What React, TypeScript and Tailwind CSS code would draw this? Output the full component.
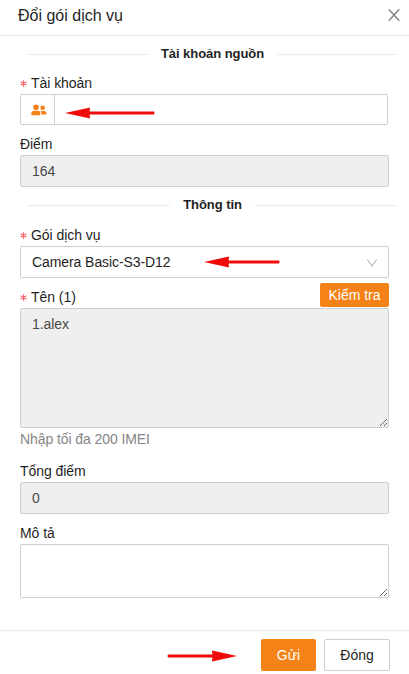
import React from "react";

function Arrow({ className, length, flip = false }: { className: string; length: number; flip?: boolean }) {
  return (
    <svg width={length} height={12} viewBox={`0 0 ${length} 12`} className={className} aria-hidden="true">
      <g fill="#f00a0a" transform={flip ? `translate(${length} 0) scale(-1 1)` : undefined}>
        <path d={`M0 6 L25 0.6 L24.6 4.6 H${length - 1} Q${length} 6 ${length - 1} 7.4 H24.6 L25 11.4 Z`} />
      </g>
    </svg>
  );
}

function Divider({ children }: { children: React.ReactNode }) {
  return (
    <div className="ml-2 -mr-2 flex h-[22px] items-center gap-[13px]">
      <span className="h-px flex-1 bg-[#ebebeb]" />
      <span className="text-[13px] font-bold leading-[22px] tracking-[-0.05px]">{children}</span>
      <span className="h-px flex-1 bg-[#ebebeb]" />
    </div>
  );
}

function Label({ children, required = false }: { children: React.ReactNode; required?: boolean }) {
  return (
    <label className="flex h-[22px] items-center whitespace-nowrap text-[14px] leading-[22px] tracking-[-0.05px]">
      {required && (
        <svg viewBox="0 0 7 7" className="mr-1 h-[7px] w-[7px]" fill="none" stroke="#f5606a" strokeWidth="1.1">
          <path d="M3.5 0.3V6.7M0.6 1.8L6.4 5.2M6.4 1.8L0.6 5.2" />
        </svg>
      )}
      {children}
    </label>
  );
}

const field = "block w-full rounded-[2px] border border-[#cfcfcf] px-[11px] text-[14px] tracking-[-0.08px] outline-none";

export default function App() {
  return (
    <div className="h-[674px] w-[409px] overflow-hidden bg-white font-['Liberation_Sans',Arial,sans-serif] text-[14px] text-[#1f1f1f]">
      <header className="flex h-[36px] items-center justify-between border-b border-[#ebebeb] pl-[18px] pr-[9px]">
        <h1 className="-mt-1 text-[16px] leading-[22px]">Đổi gói dịch vụ</h1>
        <button aria-label="Close" className="-mt-[5px]">
          <svg viewBox="0 0 12 12" className="h-[12px] w-[12px]" fill="none" stroke="#7d7d7d" strokeWidth="1.3">
            <path d="M0.7 0.2L11.3 11.8M11.3 0.2L0.7 11.8" />
          </svg>
        </button>
      </header>

      <main className="h-[594px] px-5 pt-[7px]">
        <Divider>Tài khoản nguồn</Divider>
        <div className="mt-[7px]">
          <Label required>Tài khoản</Label>
          <div className="mr-px flex h-[31px] rounded-[2px] border border-[#cfcfcf]">
            <div className="flex w-[34px] shrink-0 items-center justify-center border-r border-[#cfcfcf] pl-[3px] pt-px">
              <svg viewBox="0 0 16 12" className="h-[12px] w-[16px]" fill="#f58216">
                <circle cx="5" cy="3.2" r="2.8" />
                <circle cx="11.7" cy="3.8" r="2.3" />
                <path d="M0.3 9.7Q0.3 6.7 3 6.7H7Q9.3 6.7 9.3 9.7V10.3Q9.3 11.2 8.5 11.2H1.1Q0.3 11.2 0.3 10.3ZM9.5 6.9H12.7Q15.5 6.9 15.5 9.5V9.9Q15.5 10.6 14.8 10.6H10.3Q10.5 8 9.5 6.9Z" />
              </svg>
            </div>
            <div className="flex items-center pl-[10px] pt-[6px]">
              <Arrow length={90} className="shrink-0" />
            </div>
          </div>
        </div>

        <div className="mt-2">
          <Label>Điểm</Label>
          <input readOnly value="164" className={field + " h-[32px] bg-[#efefef] text-[#484848]"} />
        </div>

        <div className="mt-[7px]">
          <Divider>Thông tin</Divider>
        </div>

        <div className="mt-2">
          <Label required>Gói dịch vụ</Label>
          <div className={field + " flex h-[32px] items-center"}>
            <span className="w-[139px] whitespace-nowrap">Camera Basic-S3-D12</span>
            <Arrow length={76} className="ml-[33px] shrink-0" />
            <svg viewBox="0 0 10 8" className="ml-auto mt-px h-[8px] w-[10px]" fill="none" stroke="#b8b8b8" strokeWidth="1.1">
              <path d="M0.4 0.5L5 7L9.6 0.5" />
            </svg>
          </div>
        </div>

        <div className="mt-[5px]">
          <div className="flex h-[25px] justify-between">
            <div className="pt-[3px]">
              <Label required>Tên (1)</Label>
            </div>
            <button className="h-6 w-[69px] rounded-[2px] bg-[#f58216] text-[14px] leading-6 text-white">
              Kiểm tra
            </button>
          </div>
          <textarea readOnly value="1.alex" className={field + " h-[120px] resize bg-[#efefef] py-1 leading-[22px] text-[#484848]"} />
          <p className="h-[22px] leading-[22px] tracking-[-0.08px] text-[#858585]">Nhập tối đa 200 IMEI</p>
        </div>

        <div className="mt-[10px]">
          <Label>Tổng điểm</Label>
          <input readOnly value="0" className={field + " h-[32px] bg-[#efefef] text-[#484848]"} />
        </div>

        <div className="mt-2">
          <Label>Mô tả</Label>
          <textarea className={field + " h-[54px] resize py-1"} />
        </div>
      </main>

      <footer className="flex h-[44px] items-start justify-end border-t border-[#ebebeb] pr-[19px] pt-2">
        <Arrow flip length={70} className="mr-[24px] mt-[11px] shrink-0" />
        <button className="h-8 w-[55px] rounded-[2px] bg-[#f58216] text-white">Gửi</button>
        <button className="ml-2 h-8 w-[66px] rounded-[2px] border border-[#cfcfcf]">Đóng</button>
      </footer>
    </div>
  );
}
